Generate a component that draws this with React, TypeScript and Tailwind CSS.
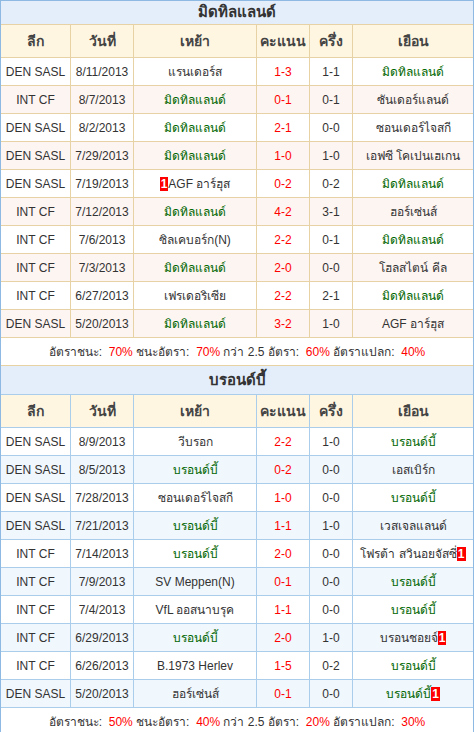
type Row = {
  league: string;
  date: string;
  home: string;
  homeWin?: boolean;
  homeBadge?: boolean;
  score: string;
  half: string;
  away: string;
  awayWin?: boolean;
  awayBadge?: boolean;
};

const midtjylland: Row[] = [
  { league: "DEN SASL", date: "8/11/2013", home: "แรนเดอร์ส", score: "1-3", half: "1-1", away: "มิดทิลแลนด์", awayWin: true },
  { league: "INT CF", date: "8/7/2013", home: "มิดทิลแลนด์", homeWin: true, score: "0-1", half: "0-1", away: "ซันเดอร์แลนด์" },
  { league: "DEN SASL", date: "8/2/2013", home: "มิดทิลแลนด์", homeWin: true, score: "2-1", half: "0-0", away: "ซอนเดอร์ไจสกี" },
  { league: "DEN SASL", date: "7/29/2013", home: "มิดทิลแลนด์", homeWin: true, score: "1-0", half: "1-0", away: "เอฟซี โคเปนเฮเกน" },
  { league: "DEN SASL", date: "7/19/2013", home: "AGF อาร์ฮุส", homeBadge: true, score: "0-2", half: "0-2", away: "มิดทิลแลนด์", awayWin: true },
  { league: "INT CF", date: "7/12/2013", home: "มิดทิลแลนด์", homeWin: true, score: "4-2", half: "3-1", away: "ฮอร์เซ่นส์" },
  { league: "INT CF", date: "7/6/2013", home: "ซิลเคบอร์ก(N)", score: "2-2", half: "0-1", away: "มิดทิลแลนด์", awayWin: true },
  { league: "INT CF", date: "7/3/2013", home: "มิดทิลแลนด์", homeWin: true, score: "2-0", half: "0-0", away: "โฮลสไตน์ คีล" },
  { league: "INT CF", date: "6/27/2013", home: "เฟรเดอริเซีย", score: "2-2", half: "2-1", away: "มิดทิลแลนด์", awayWin: true },
  { league: "DEN SASL", date: "5/20/2013", home: "มิดทิลแลนด์", homeWin: true, score: "3-2", half: "1-0", away: "AGF อาร์ฮุส" },
];

const brondby: Row[] = [
  { league: "DEN SASL", date: "8/9/2013", home: "วีบรอก", score: "2-2", half: "1-0", away: "บรอนด์บี้", awayWin: true },
  { league: "DEN SASL", date: "8/5/2013", home: "บรอนด์บี้", homeWin: true, score: "0-2", half: "0-0", away: "เอสเบิร์ก" },
  { league: "DEN SASL", date: "7/28/2013", home: "ซอนเดอร์ไจสกี", score: "1-0", half: "0-0", away: "บรอนด์บี้", awayWin: true },
  { league: "DEN SASL", date: "7/21/2013", home: "บรอนด์บี้", homeWin: true, score: "1-1", half: "1-0", away: "เวสเจลแลนด์" },
  { league: "INT CF", date: "7/14/2013", home: "บรอนด์บี้", homeWin: true, score: "2-0", half: "0-0", away: "โฟรต้า สวินอยจัสซี่", awayBadge: true },
  { league: "INT CF", date: "7/9/2013", home: "SV Meppen(N)", score: "0-1", half: "0-0", away: "บรอนด์บี้", awayWin: true },
  { league: "INT CF", date: "7/4/2013", home: "VfL ออสนาบรุค", score: "1-1", half: "0-0", away: "บรอนด์บี้", awayWin: true },
  { league: "INT CF", date: "6/29/2013", home: "บรอนด์บี้", homeWin: true, score: "2-0", half: "1-0", away: "บรอนชอยจ์", awayBadge: true },
  { league: "INT CF", date: "6/26/2013", home: "B.1973 Herlev", score: "1-5", half: "0-2", away: "บรอนด์บี้", awayWin: true },
  { league: "DEN SASL", date: "5/20/2013", home: "ฮอร์เซ่นส์", score: "0-1", half: "0-0", away: "บรอนด์บี้", awayWin: true, awayBadge: true },
];

const cols = "grid grid-cols-[69px_63px_123px_53px_43px_121px]";

const Badge = () => (
  <span className="inline-block bg-[#f00] text-white font-bold text-[12px] leading-[14px] px-[1px]">1</span>
);

const Team = ({ name, win, badge, badgeFirst }: { name: string; win?: boolean; badge?: boolean; badgeFirst?: boolean }) => (
  <span className={win ? "text-[#006600]" : "text-[#333]"}>
    {badge && badgeFirst && <Badge />}
    {name}
    {badge && !badgeFirst && <Badge />}
  </span>
);

const Section = ({
  title,
  rows,
  line,
  alt,
  stats,
  titleH,
  summaryH,
}: {
  title: string;
  rows: Row[];
  line: string;
  alt: string;
  stats: string[];
  titleH: string;
  summaryH: string;
}) => (
  <div>
    <div className={`${titleH} flex items-center justify-center bg-[#e3eefa] border-b ${line} text-[15px] font-bold text-[#333]`}>
      {title}
    </div>
    <div className={`${cols} h-[33px] bg-[#fff6e1] border-b ${line} text-[14px] font-semibold text-[#444]`}>
      {["ลีก", "วันที่", "เหย้า", "คะแนน", "ครึ่ง", "เยือน"].map((h, i) => (
        <div key={h} className={`flex items-center justify-center ${i > 0 ? `border-l ${line}` : ""}`}>
          {h}
        </div>
      ))}
    </div>
    {rows.map((r, idx) => (
      <div key={idx} className={`${cols} h-[28px] border-b ${line} text-[12px] text-[#333] ${idx % 2 === 1 ? alt : "bg-white"}`}>
        <div className="flex items-center justify-center">{r.league}</div>
        <div className={`flex items-center justify-center border-l ${line}`}>{r.date}</div>
        <div className={`flex items-center justify-center border-l ${line}`}>
          <Team name={r.home} win={r.homeWin} badge={r.homeBadge} badgeFirst />
        </div>
        <div className={`flex items-center justify-center border-l ${line} text-[#f00]`}>{r.score}</div>
        <div className={`flex items-center justify-center border-l ${line}`}>{r.half}</div>
        <div className={`flex items-center justify-center border-l ${line}`}>
          <Team name={r.away} win={r.awayWin} badge={r.awayBadge} />
        </div>
      </div>
    ))}
    <div className={`${summaryH} flex items-center justify-center bg-white border-b ${line} text-[12px] text-[#333] whitespace-pre`}>
      อัตราชนะ:  <span className="text-[#f00]">{stats[0]}</span> ชนะอัตรา:  <span className="text-[#f00]">{stats[1]}</span> กว่า 2.5 อัตรา:  <span className="text-[#f00]">{stats[2]}</span> อัตราแปลก:  <span className="text-[#f00]">{stats[3]}</span>
    </div>
  </div>
);

export default function App() {
  return (
    <div
      className="w-[474px] h-[732px] overflow-hidden bg-white"
      style={{ fontFamily: '"Liberation Sans", Arial, "Noto Sans", sans-serif' }}
    >
      <div className="border border-[#8db9e2]">
        <Section
          title="มิดทิลแลนด์"
          rows={midtjylland}
          line="border-[#e6d2a5]"
          alt="bg-[#fdf5f2]"
          stats={["70%", "70%", "60%", "40%"]}
          titleH="h-[24px]"
          summaryH="h-[28px]"
        />
        <Section
          title="บรอนด์บี้"
          rows={brondby}
          line="border-[#a9cdea]"
          alt="bg-[#f0f7fd]"
          stats={["50%", "40%", "20%", "30%"]}
          titleH="h-[29px]"
          summaryH="h-[28px]"
        />
      </div>
    </div>
  );
}
